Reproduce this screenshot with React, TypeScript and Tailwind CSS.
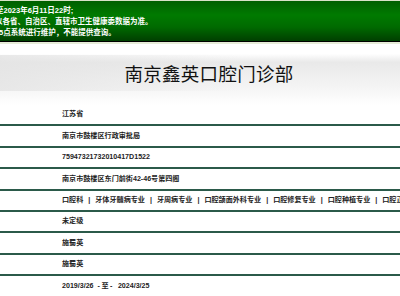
const specialties = [
  "口腔科",
  "牙体牙髓病专业",
  "牙周病专业",
  "口腔颌面外科专业",
  "口腔修复专业",
  "口腔种植专业",
  "口腔正畸专业",
];

const Row = ({ children }: { children: React.ReactNode }) => (
  <div className="h-[21.4px] border-b-[2px] border-[#2b5a4a] flex items-center pl-[62px] whitespace-nowrap text-[7.1px] font-bold text-[#222]">
    {children}
  </div>
);

export default function App() {
  return (
    <div
      className="w-[400px] h-[296px] overflow-hidden bg-white"
      style={{ fontFamily: '"Liberation Sans", "Noto Sans CJK SC", sans-serif' }}
    >
      {/* notice banner */}
      <div className="border-t border-[#d8e2c8] border-b-[2px] border-b-[#e6ecd8]">
        <div className="h-[41px] border-b border-black bg-[linear-gradient(to_bottom,#005f00_0%,#007a00_35%,#006a00_65%,#003f00_100%)] overflow-hidden text-white text-[7.5px] font-bold leading-[11px] pt-[4px] whitespace-nowrap">
          <div className="-ml-[4px]">至2023年6月11日22时;</div>
          <div className="-ml-[5px]">以各省、自治区、直辖市卫生健康委数据为准。</div>
          <div className="-ml-[1px]">5点系统进行维护，不能提供查询。</div>
        </div>
      </div>

      {/* title */}
      <div className="h-[61px] pt-[11px] bg-[linear-gradient(to_bottom,#ffffff_0%,#ffffff_16%,#e9e9e9_30%,#f4f4f4_70%,#ffffff_100%)]">
        <div className="bg-[linear-gradient(to_right,rgba(228,228,228,0.8),rgba(255,255,255,0)_60%)] h-[36px] flex items-center justify-center">
          <h1
            className="text-[18.5px] leading-none text-[#111] pl-[18px] tracking-[0.3px]"
            style={{ fontFamily: '"Noto Sans CJK SC", sans-serif' }}
          >
            南京鑫英口腔门诊部
          </h1>
        </div>
      </div>

      {/* info rows */}
      <div>
        <Row>江苏省</Row>
        <Row>南京市鼓楼区行政审批局</Row>
        <Row>75947321732010417D1522</Row>
        <Row>南京市鼓楼区东门前街42-46号第四阁</Row>
        <Row>
          {specialties.map((s, i) => (
            <span key={s}>
              {i > 0 && <span className="mx-[5px]">|</span>}
              {s}
            </span>
          ))}
        </Row>
        <Row>未定级</Row>
        <Row>施蜀英</Row>
        <Row>施蜀英</Row>
        <Row>
          <span>2019/3/26</span>
          <span className="mx-[4px] tracking-[1.5px]">-至-</span>
          <span>2024/3/25</span>
        </Row>
      </div>
    </div>
  );
}
